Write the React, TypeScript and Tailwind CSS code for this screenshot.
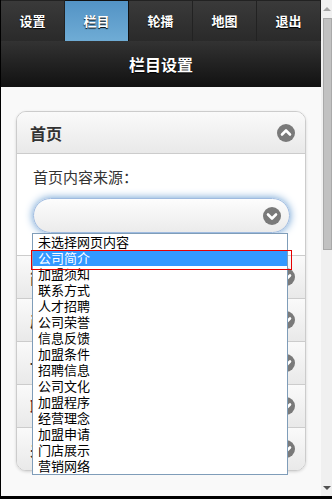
import React from "react";

const font = { fontFamily: '"Noto Sans CJK SC", "Noto Sans", sans-serif' };

const tabs = ["设置", "栏目", "轮播", "地图", "退出"];

const options = [
  "未选择网页内容",
  "公司简介",
  "加盟须知",
  "联系方式",
  "人才招聘",
  "公司荣誉",
  "信息反馈",
  "加盟条件",
  "招聘信息",
  "公司文化",
  "加盟程序",
  "经营理念",
  "加盟申请",
  "门店展示",
  "营销网络",
];

const collapsed = ["简介", "产品", "一览", "联系", "关于"];

function CircleIcon({ up }: { up?: boolean }) {
  return (
    <svg width="18" height="18" viewBox="0 0 18 18">
      <circle cx="9" cy="9" r="9" fill="#7a7a7a" />
      <path
        d={up ? "M5 10.5 L9 6.5 L13 10.5" : "M5 7.5 L9 11.5 L13 7.5"}
        fill="none"
        stroke="#fff"
        strokeWidth="2.6"
        strokeLinecap="round"
        strokeLinejoin="round"
      />
    </svg>
  );
}

export default function App() {
  return (
    <div className="relative w-[332px] h-[499px] overflow-hidden bg-black" style={font}>
      <div className="flex h-[496px] ml-px">
        {/* main column */}
        <div className="w-[320px] h-full flex flex-col bg-[#f9f9f9]">
          <div className="flex h-[41px] bg-black">
            {tabs.map((t, i) => (
              <div
                key={t}
                className={
                  "w-[64px] flex items-center justify-center text-[13px] font-bold text-white border-r border-[#111] [text-shadow:0_1px_1px_#000] " +
                  (i === 1
                    ? "bg-gradient-to-b from-[#5393c5] to-[#6facd5] border-t border-[#2a6496] [text-shadow:0_1px_0_#3373a5]"
                    : "bg-gradient-to-b from-[#3a3a3a] to-[#2a2a2a] border-t border-[#222]")
                }
              >
                {t}
              </div>
            ))}
          </div>
          <div className="h-[46px] flex items-center justify-center bg-gradient-to-b from-[#333] to-[#121212] text-white text-[16px] font-bold [text-shadow:0_1px_1px_#000]">
            栏目设置
          </div>
          <div className="flex-1 px-[15px] pt-[24px]">
            <div className="rounded-[10px] border border-[#ccc] overflow-hidden shadow-[0_1px_3px_rgba(0,0,0,0.15)]">
              <div className="h-[42px] flex items-center justify-between pl-[13px] pr-[10px] bg-gradient-to-b from-[#fafafa] to-[#e9e9e9] border-b border-[#ccc]">
                <span className="text-[16px] font-bold text-[#333]">首页</span>
                <CircleIcon up />
              </div>
              <div className="bg-white px-[16px] pt-[12px] pb-[22px]">
                <div className="text-[15px] text-[#333] leading-[22px]">首页内容来源：</div>
                <div className="mt-[10px] mr-[-1px] h-[35px] rounded-full border border-[#9fbbe0] bg-gradient-to-b from-[#fdfdfd] to-[#ebebeb] shadow-[0_0_8px_#5f97cf] flex items-center justify-end pr-[8px]">
                  <CircleIcon />
                </div>
              </div>
              {collapsed.map((c, i) => (
                <div
                  key={c}
                  className={
                    "h-[43px] flex items-center justify-between pl-[13px] pr-[10px] bg-gradient-to-b from-[#fafafa] to-[#e9e9e9] border-t border-[#ccc] " +
                    (i === 3 ? "text-[#6b1f2a]" : "text-[#333]")
                  }
                >
                  <span className="text-[16px] font-bold">{c}</span>
                  <CircleIcon />
                </div>
              ))}
            </div>
          </div>
        </div>
        {/* scrollbar */}
        <div className="w-[11px] h-full bg-[#f0f0f0] flex flex-col items-center">
          <div className="h-[18px] flex items-center justify-center">
            <div className="w-0 h-0 border-l-[4px] border-r-[4px] border-b-[4px] border-l-transparent border-r-transparent border-b-[#a3a3a3]" />
          </div>
          <div className="w-[9px] ml-[2px] h-[232px] bg-[#c1c1c1] border border-[#a9a9a9]" />
          <div className="flex-1" />
          <div className="h-[16px] flex items-center justify-center">
            <div className="w-0 h-0 border-l-[4px] border-r-[4px] border-t-[4px] border-l-transparent border-r-transparent border-t-[#505050]" />
          </div>
        </div>
      </div>

      {/* native select dropdown */}
      <div className="absolute left-[32px] top-[233px] w-[256px] bg-white border border-[#7f9db9]">
        {options.map((o, i) => (
          <div
            key={o}
            className={
              "h-[16px] leading-[16px] pl-[5px] text-[13px] " +
              (i === 1 ? "bg-[#3399ff] text-white" : "text-black")
            }
          >
            {o}
          </div>
        ))}
      </div>
      <div className="absolute left-[31px] top-[250px] w-[261px] h-[20px] border border-[#e60000]" />
    </div>
  );
}
